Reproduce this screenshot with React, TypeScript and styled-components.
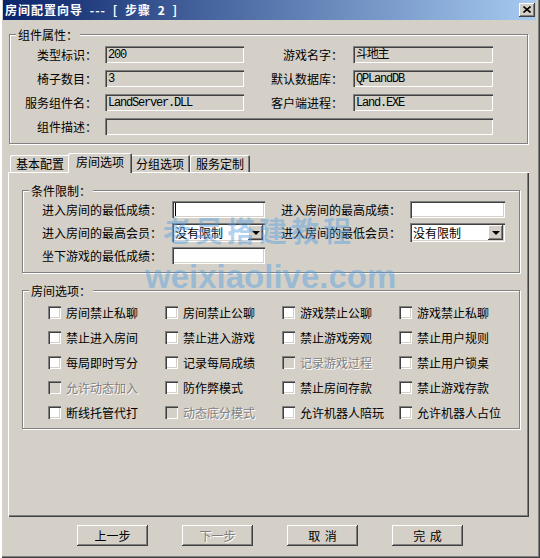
import React from "react";
import styled, { createGlobalStyle, css } from "styled-components";

const FACE = "#d4d0c8";
const FONT = `"Noto Sans CJK SC", "Noto Sans", sans-serif`;
const MONO = `"Liberation Mono", "Noto Sans CJK SC", monospace`;

const Global = createGlobalStyle`
  html, body { margin: 0; padding: 0; background: ${FACE}; }
  body { font-family: ${FONT}; font-size: 12px; color: #000; }
  * { box-sizing: border-box; }
`;

const sunken = css`
  box-shadow: inset 1px 1px 0 #808080, inset 2px 2px 0 #404040,
    inset -1px -1px 0 #fff, inset -2px -2px 0 ${FACE};
`;
const raised = css`
  box-shadow: inset -1px -1px 0 #404040, inset 1px 1px 0 #fff,
    inset -2px -2px 0 #808080;
`;
const disabledText = css`
  color: #808080;
  text-shadow: 1px 1px 0 #fff;
`;

const Window = styled.div`
  position: relative;
  width: 540px;
  height: 558px;
  overflow: hidden;
  background: ${FACE};
  padding: 0 4px 3px 3px;
  box-shadow: inset 2px 0 0 #fff, inset -1px -1px 0 #404040,
    inset -2px -2px 0 #808080;
  display: flex;
  flex-direction: column;
`;

const TitleBar = styled.div`
  height: 20px;
  flex: none;
  display: flex;
  align-items: center;
  justify-content: space-between;
  padding: 0 1px 0 2px;
  background: linear-gradient(to right, #0a246a, #a6caf0);
`;

const TitleText = styled.span`
  color: #fff;
  font-weight: bold;
  font-size: 12px;
  line-height: 14px;
  letter-spacing: 1px;
  word-spacing: 3px;
  white-space: pre;
`;

const CloseButton = styled.div`
  width: 16px;
  height: 14px;
  background: ${FACE};
  ${raised};
  display: flex;
  align-items: center;
  justify-content: center;
  padding-bottom: 1px;
`;

const GroupBox = styled.div<{ $w: number; $mt: number; $ml: number }>`
  position: relative;
  flex: none;
  width: ${(p) => p.$w}px;
  margin-top: ${(p) => p.$mt}px;
  margin-left: ${(p) => p.$ml}px;
  border: 1px solid #808080;
  box-shadow: 1px 1px 0 #fff, inset 1px 1px 0 #fff;
`;

const Legend = styled.span`
  position: absolute;
  top: -8px;
  left: 6px;
  padding: 0 2px;
  background: ${FACE};
  line-height: 15px;
  white-space: nowrap;
`;

const PropsGrid = styled.div`
  display: grid;
  grid-template-columns: 95px 139px 109px 140px;
  grid-auto-rows: 17px;
  row-gap: 7px;
  padding: 11px 0 8px 0;
  align-items: center;
`;

const RightLabel = styled.span<{ $pr: number }>`
  text-align: right;
  padding-right: ${(p) => p.$pr}px;
  white-space: nowrap;
  line-height: 14px;
`;

const Field = styled.div<{ $w?: number; $white?: boolean; $span?: string }>`
  height: 17px;
  width: ${(p) => (p.$w ? `${p.$w}px` : "100%")};
  grid-column: ${(p) => p.$span || "auto"};
  background: ${(p) => (p.$white ? "#fff" : FACE)};
  ${sunken};
  display: flex;
  align-items: center;
  padding: 2px 3px 0 3px;
  font-family: ${MONO};
  font-size: 12px;
  letter-spacing: -1.2px;
  line-height: 13px;
  white-space: nowrap;
`;

const Caret = styled.span`
  width: 1px;
  height: 13px;
  margin-top: -2px;
  background: #000;
`;

const TabStrip = styled.div`
  flex: none;
  display: flex;
  align-items: flex-end;
  height: 19px;
  margin: 9px 0 0 5px;
  padding-left: 2px;
`;

const Tab = styled.div<{ $active?: boolean }>`
  position: relative;
  width: 60px;
  height: 17px;
  background: ${FACE};
  border-radius: 2px 2px 0 0;
  box-shadow: inset 1px 1px 0 #fff, inset -1px 0 0 #404040,
    inset -2px 0 0 #808080;
  display: flex;
  align-items: center;
  justify-content: center;
  line-height: 14px;
  padding-top: 1px;
  white-space: nowrap;
  ${(p) =>
    p.$active &&
    css`
      z-index: 2;
      width: 64px;
      height: 20px;
      margin: 0 -2px -1px -2px;
      padding-bottom: 3px;
    `}
`;

const Panel = styled.div`
  flex: none;
  width: 521px;
  height: 345px;
  margin-left: 5px;
  padding: 18px 0 0 14px;
  box-shadow: inset 1px 1px 0 #fff, inset -1px -1px 0 #404040,
    inset -2px -2px 0 #808080;
  display: flex;
  flex-direction: column;
`;

const LimitGrid = styled.div`
  display: grid;
  grid-template-columns: 130px 109px 129px 95px;
  grid-template-rows: 17px 19px 17px;
  row-gap: 5px;
  padding: 10px 0 8px 19px;
  align-items: center;
`;

const Label = styled.span`
  white-space: nowrap;
  line-height: 14px;
`;

const Combo = styled.div<{ $w: number }>`
  width: ${(p) => p.$w}px;
  height: 19px;
  background: #fff;
  ${sunken};
  display: flex;
  align-items: center;
  justify-content: space-between;
  padding: 2px 2px 2px 3px;
  line-height: 14px;
`;

const DropButton = styled.div`
  width: 15px;
  height: 15px;
  background: ${FACE};
  ${raised};
  display: flex;
  align-items: center;
  justify-content: center;
`;

const Arrow = styled.span`
  width: 0;
  height: 0;
  border-left: 4px solid transparent;
  border-right: 4px solid transparent;
  border-top: 4px solid #000;
  margin-top: 1px;
`;

const CheckGrid = styled.div`
  display: grid;
  grid-template-columns: repeat(4, 117px);
  grid-auto-rows: 13px;
  row-gap: 12px;
  padding: 15px 0 9px 25px;
`;

const CheckItem = styled.div<{ $disabled?: boolean }>`
  display: flex;
  align-items: center;
  gap: 5px;
  white-space: nowrap;
  line-height: 13px;
  ${(p) => p.$disabled && disabledText};
`;

const Box = styled.span<{ $disabled?: boolean }>`
  flex: none;
  width: 13px;
  height: 13px;
  background: ${(p) => (p.$disabled ? FACE : "#fff")};
  ${sunken};
`;

const ButtonRow = styled.div`
  flex: none;
  display: flex;
  gap: 34px;
  margin-top: 8px;
  padding-left: 74px;
`;

const Button = styled.div<{ $disabled?: boolean }>`
  width: 71px;
  height: 21px;
  background: ${FACE};
  ${raised};
  display: flex;
  align-items: center;
  justify-content: center;
  line-height: 14px;
  white-space: pre;
  word-spacing: 2px;
  ${(p) => p.$disabled && disabledText};
`;

const Watermark = styled.div<{ $top: number; $left: number; $size: number; $ls: number; $family: string }>`
  position: absolute;
  top: ${(p) => p.$top}px;
  left: ${(p) => p.$left}px;
  font-family: ${(p) => p.$family};
  font-size: ${(p) => p.$size}px;
  letter-spacing: ${(p) => p.$ls}px;
  font-weight: bold;
  line-height: 1;
  color: rgba(90, 160, 225, 0.48);
  white-space: nowrap;
  pointer-events: none;
  z-index: 5;
`;

const options: { label: string; disabled?: boolean }[] = [
  { label: "房间禁止私聊" },
  { label: "房间禁止公聊" },
  { label: "游戏禁止公聊" },
  { label: "游戏禁止私聊" },
  { label: "禁止进入房间" },
  { label: "禁止进入游戏" },
  { label: "禁止游戏旁观" },
  { label: "禁止用户规则" },
  { label: "每局即时写分" },
  { label: "记录每局成绩" },
  { label: "记录游戏过程", disabled: true },
  { label: "禁止用户锁桌" },
  { label: "允许动态加入", disabled: true },
  { label: "防作弊模式" },
  { label: "禁止房间存款" },
  { label: "禁止游戏存款" },
  { label: "断线托管代打" },
  { label: "动态底分模式", disabled: true },
  { label: "允许机器人陪玩" },
  { label: "允许机器人占位" },
];

export default function App() {
  return (
    <>
      <Global />
      <Window>
        <TitleBar>
          <TitleText>房间配置向导 --- [ 步骤 2 ]</TitleText>
          <CloseButton>
            <svg width="8" height="7" viewBox="0 0 8 7">
              <path d="M0.5 0.5 L7.5 6.5 M7.5 0.5 L0.5 6.5" stroke="#000" strokeWidth="1.6" fill="none" />
            </svg>
          </CloseButton>
        </TitleBar>

        <GroupBox $w={519} $mt={14} $ml={6}>
          <Legend>组件属性：</Legend>
          <PropsGrid>
            <RightLabel $pr={8}>类型标识：</RightLabel>
            <Field>200</Field>
            <RightLabel $pr={10}>游戏名字：</RightLabel>
            <Field>斗地主</Field>
            <RightLabel $pr={8}>椅子数目：</RightLabel>
            <Field>3</Field>
            <RightLabel $pr={10}>默认数据库：</RightLabel>
            <Field>QPLandDB</Field>
            <RightLabel $pr={8}>服务组件名：</RightLabel>
            <Field>LandServer.DLL</Field>
            <RightLabel $pr={10}>客户端进程：</RightLabel>
            <Field>Land.EXE</Field>
            <RightLabel $pr={8}>组件描述：</RightLabel>
            <Field $span="2 / 5" />
          </PropsGrid>
        </GroupBox>

        <TabStrip>
          <Tab>基本配置</Tab>
          <Tab $active>房间选项</Tab>
          <Tab>分组选项</Tab>
          <Tab>服务定制</Tab>
        </TabStrip>

        <Panel>
          <GroupBox $w={498} $mt={0} $ml={0}>
            <Legend>条件限制：</Legend>
            <LimitGrid>
              <Label>进入房间的最低成绩：</Label>
              <Field $w={93} $white>
                <Caret />
              </Field>
              <Label>进入房间的最高成绩：</Label>
              <Field $w={95} $white />
              <Label>进入房间的最高会员：</Label>
              <Combo $w={93}>
                没有限制
                <DropButton>
                  <Arrow />
                </DropButton>
              </Combo>
              <Label>进入房间的最低会员：</Label>
              <Combo $w={95}>
                没有限制
                <DropButton>
                  <Arrow />
                </DropButton>
              </Combo>
              <Label>坐下游戏的最低成绩：</Label>
              <Field $w={93} $white />
            </LimitGrid>
          </GroupBox>

          <GroupBox $w={498} $mt={17} $ml={0}>
            <Legend>房间选项：</Legend>
            <CheckGrid>
              {options.map((o) => (
                <CheckItem key={o.label} $disabled={o.disabled}>
                  <Box $disabled={o.disabled} />
                  {o.label}
                </CheckItem>
              ))}
            </CheckGrid>
          </GroupBox>
        </Panel>

        <ButtonRow>
          <Button>上一步</Button>
          <Button $disabled>下一步</Button>
          <Button>取 消</Button>
          <Button>完 成</Button>
        </ButtonRow>

        <Watermark $top={216} $left={163} $size={28} $ls={4} $family={FONT}>
          老吴搭建教程
        </Watermark>
        <Watermark $top={260} $left={145} $size={33} $ls={0} $family={`"Liberation Sans", sans-serif`}>
          weixiaolive.com
        </Watermark>
      </Window>
    </>
  );
}
